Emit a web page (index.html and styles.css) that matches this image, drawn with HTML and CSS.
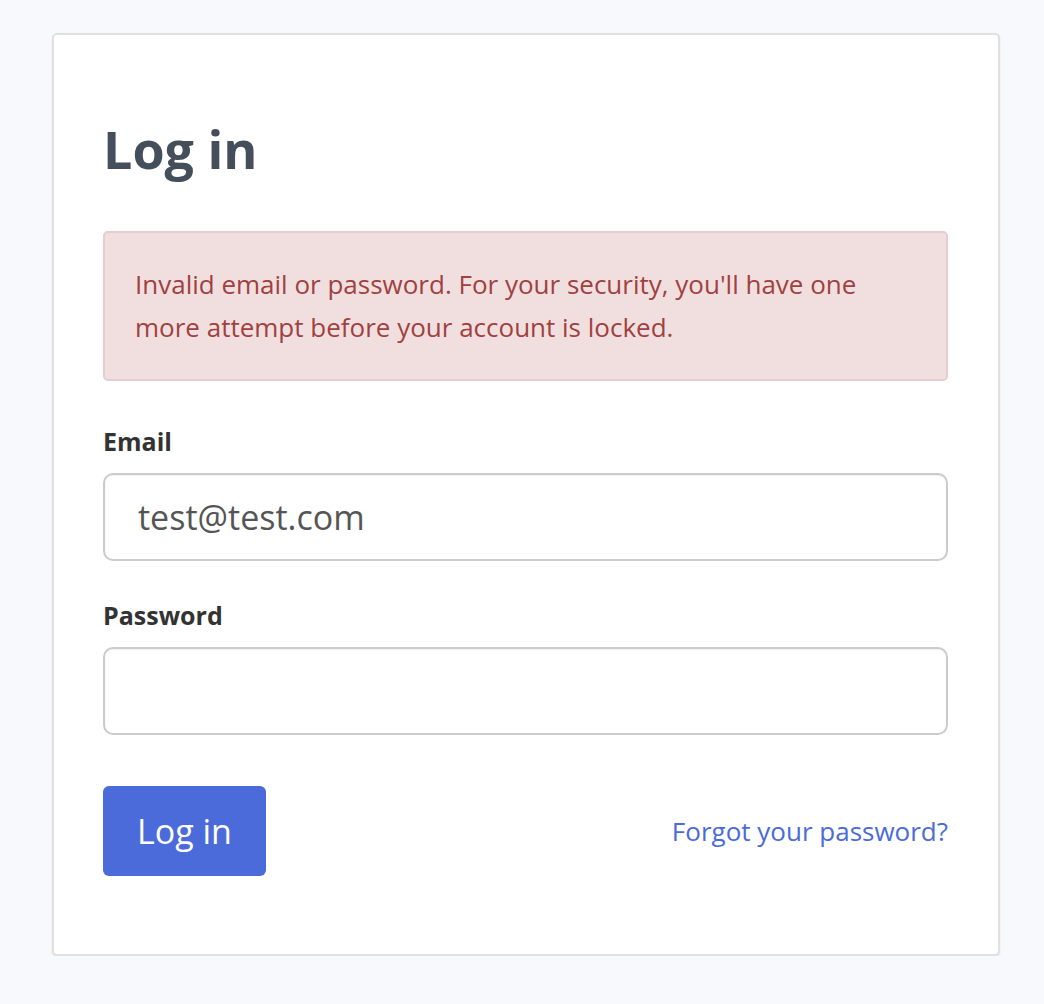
FILE: index.html
```html
<!DOCTYPE html>
<html lang="en">

<head>
    <meta charset="UTF-8">
    <meta name="viewport" content="width=device-width, initial-scale=1.0">
    <title>Log in</title>
    <link rel="stylesheet" href="styles.css">
</head>

<body>
    <div class="login_card">
        <h1 class="login_title">Log in</h1>

        <div class="alert_error">
            Invalid email or password. For your security, you'll have one more attempt before your account is locked.
        </div>

        <form class="login_form" onsubmit="return false;">
            <div class="field">
                <label for="email">Email</label>
                <input type="text" id="email" name="email" value="test@test.com">
            </div>
            <div class="field">
                <label for="password">Password</label>
                <input type="password" id="password" name="password">
            </div>
            <div class="form_actions">
                <button type="submit" class="btn_login">Log in</button>
                <a href="#" class="forgot_link">Forgot your password?</a>
            </div>
        </form>
    </div>
</body>

</html>
```

FILE: styles.css
```css
* {
    padding: 0;
    margin: 0;
    box-sizing: border-box;
}

body {
    background-color: #f8f9fd;
    font-family: "Open Sans", "Noto Sans", sans-serif;
    padding: 33px 44px 0 52px;
}

.login_card {
    background-color: #fff;
    border: 2px solid #e1e1e1;
    border-radius: 5px;
    box-shadow: 0 1px 2px rgba(0, 0, 0, .1);
    padding: 79px 50px 78px 49px;
}

.login_title {
    font-size: 52px;
    line-height: 1.2;
    font-weight: bold;
    color: #454e5b;
    margin: 4px 0 51px;
}

.alert_error {
    background-color: #f1dfe0;
    border: 2px solid #e7cdcf;
    border-radius: 5px;
    color: #a0413f;
    font-size: 26px;
    line-height: 43px;
    padding: 30px 30px 30px 30px;
    margin-bottom: 42px;
}

.field {
    margin-bottom: 36px;
}

.field label {
    display: block;
    font-size: 25px;
    line-height: 36px;
    font-weight: bold;
    color: #333;
    margin-bottom: 14px;
}

.field input {
    display: block;
    width: 100%;
    height: 88px;
    border: 2px solid #cbcbcb;
    border-radius: 10px;
    padding: 0 33px;
    font-family: inherit;
    font-size: 34px;
    color: #555;
    background-color: #fff;
    box-shadow: inset 0 1px 2px rgba(0, 0, 0, .06);
    outline: none;
}

.form_actions {
    display: flex;
    justify-content: space-between;
    align-items: center;
    margin-top: 51px;
}

.btn_login {
    height: 90px;
    padding: 0 34px;
    border: none;
    border-radius: 6px;
    background-color: #4a6bd9;
    color: #fff;
    font-family: inherit;
    font-size: 34px;
    cursor: pointer;
}

.forgot_link {
    color: #4a6bd9;
    font-size: 26px;
    text-decoration: none;
}
```
